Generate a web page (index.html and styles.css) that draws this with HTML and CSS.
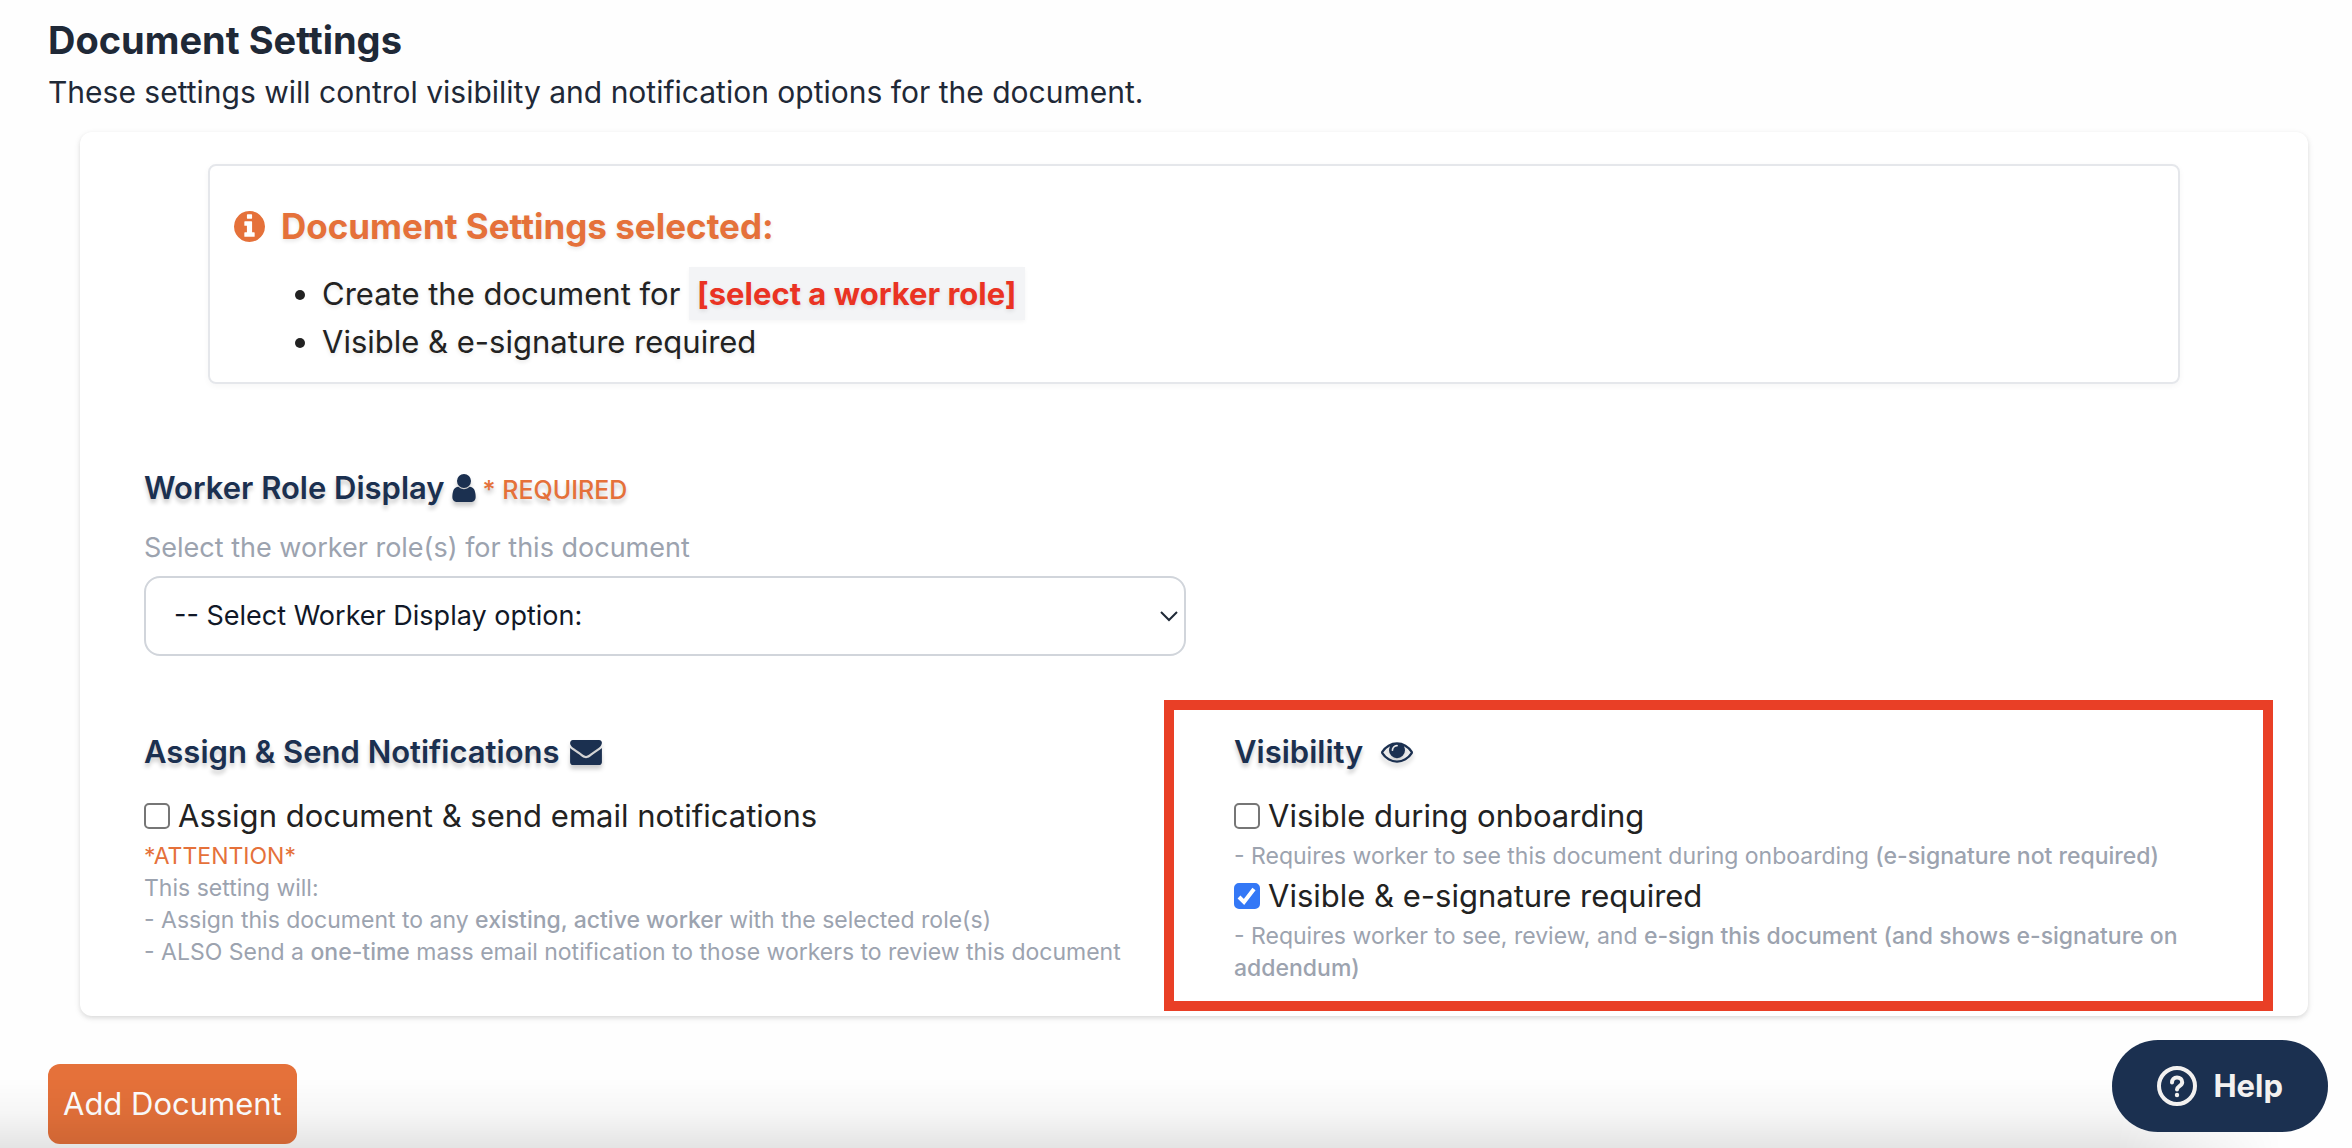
FILE: index.html
```html
<!DOCTYPE html>
<html lang="en">
<head>
    <meta charset="UTF-8">
    <meta name="viewport" content="width=device-width, initial-scale=1.0">
    <title>Document Settings</title>
    <link rel="stylesheet" href="styles.css">
</head>
<body>
    <form class="page">
        <h1>Document Settings</h1>
        <p class="intro">These settings will control visibility and notification options for the document.</p>

        <div class="card">
            <!-- Summary -->
            <div class="summary">
                <h2>
                    <svg class="icon-info" viewBox="128 128 1536 1536"><path fill="currentColor" d="M1152 1376v-160q0-14-9-23t-23-9h-96v-512q0-14-9-23t-23-9h-320q-14 0-23 9t-9 23v160q0 14 9 23t23 9h96v320h-96q-14 0-23 9t-9 23v160q0 14 9 23t23 9h448q14 0 23-9t9-23zm-128-896v-160q0-14-9-23t-23-9h-192q-14 0-23 9t-9 23v160q0 14 9 23t23 9h192q14 0 23-9t9-23zm640 416q0 209-103 385.5t-279.5 279.5-385.5 103-385.5-103-279.5-279.5-103-385.5 103-385.5 279.5-279.5 385.5-103 385.5 103 279.5 279.5 103 385.5z"/></svg>
                    Document Settings selected:
                </h2>
                <ul>
                    <li>Create the document for <strong class="chip">[select a worker role]</strong></li>
                    <li>Visible &amp; e-signature required</li>
                </ul>
            </div>

            <!-- Worker role -->
            <div class="role">
                <h3>
                    <label for="workerRole">Worker Role Display</label>
                    <svg class="icon-user" viewBox="256 128 1280 1536"><path fill="currentColor" d="M1536 1399q0 109-62.5 187t-150.5 78h-854q-88 0-150.5-78t-62.5-187q0-85 8.5-160.5t31.5-152 58.5-131 94-89 134.5-34.5q131 128 313 128t313-128q76 0 134.5 34.5t94 89 58.5 131 31.5 152 8.5 160.5zm-256-887q0 159-112.5 271.5t-271.5 112.5-271.5-112.5-112.5-271.5 112.5-271.5 271.5-112.5 271.5 112.5 112.5 271.5z"/></svg>
                    <span class="required">* REQUIRED</span>
                </h3>
                <p class="role-hint">Select the worker role(s) for this document</p>
                <select id="workerRole">
                    <option>-- Select Worker Display option:</option>
                </select>
            </div>

            <div class="columns">
                <!-- Notifications -->
                <section>
                    <h3 class="spaced">
                        Assign &amp; Send Notifications
                        <svg class="icon-mail" viewBox="0 256 1792 1408"><path fill="currentColor" d="M1792 710v794q0 66-47 113t-113 47h-1472q-66 0-113-47t-47-113v-794q44 49 101 87 362 246 497 345 57 42 92.5 65.5t94.5 48 110 24.5h2q51 0 110-24.5t94.5-48 92.5-65.5q170-123 498-345 57-39 100-87zm0-294q0 79-49 151t-122 123q-376 261-468 325-10 7-42.5 31t-54 38.5-52 32.5-57.5 27-50 9h-2q-23 0-50-9t-57.5-27-52-32.5-54-38.5-42.5-31q-91-64-262-182.5t-205-142.5q-62-42-117-115.5t-55-136.5q0-78 41.5-130t118.5-52h1472q65 0 112.5 47t47.5 113z"/></svg>
                    </h3>
                    <label class="check"><input type="checkbox"> Assign document &amp; send email notifications</label>
                    <p class="hint attention">*ATTENTION*</p>
                    <p class="hint">This setting will:</p>
                    <p class="hint">- Assign this document to any <b>existing, active worker</b> with the selected role(s)</p>
                    <p class="hint">- ALSO Send a <b>one-time</b> mass email notification to those workers to review this document</p>
                </section>

                <!-- Visibility -->
                <section class="highlight">
                    <h3 class="wide">
                        Visibility
                        <svg class="icon-eye" viewBox="0 384 1792 1152"><path fill="currentColor" d="M1664 960q-152-236-381-353 61 104 61 225 0 185-131.5 316.5t-316.5 131.5-316.5-131.5-131.5-316.5q0-121 61-225-229 117-381 353 133 205 333.5 326.5t434.5 121.5 434.5-121.5 333.5-326.5zm-720-384q0-20-14-34t-34-14q-125 0-214.5 89.5t-89.5 214.5q0 20 14 34t34 14 34-14 14-34q0-86 61-147t147-61q20 0 34-14t14-34zm848 384q0 34-20 69-140 230-376.5 368.5t-499.5 138.5-499.5-139-376.5-368q-20-35-20-69t20-69q140-229 376.5-368t499.5-139 499.5 139 376.5 368q20 35 20 69z"/></svg>
                    </h3>
                    <label class="check"><input type="checkbox"> Visible during onboarding</label>
                    <p class="hint">- Requires worker to see this document during onboarding <b>(e-signature not required)</b></p>
                    <label class="check"><input type="checkbox" checked> Visible &amp; e-signature required</label>
                    <p class="hint">- Requires worker to see, review, and <b>e-sign this document (and shows e-signature on addendum)</b></p>
                </section>
            </div>
        </div>

        <button type="button" class="add">Add Document</button>
    </form>

    <div class="fade"></div>

    <button type="button" class="help">
        <svg viewBox="0 0 40 40" fill="none" stroke="currentColor" stroke-linecap="round" stroke-linejoin="round">
            <circle cx="20" cy="20" r="18" stroke-width="4"/>
            <path stroke-width="4" d="M15 16.500c0-3 2-5 5-5s5.200 2 5.200 4.700c0 3.800-5.200 4-5.200 7.300"/>
            <circle cx="20" cy="29" r="2.200" fill="currentColor" stroke="none"/>
        </svg>
        Help
    </button>
</body>
</html>
```
FILE: styles.css
```css
* {
    box-sizing: border-box;
}
body {
    margin: 0;
    font-family: Inter, "Liberation Sans", sans-serif;
    font-size: 31px;
    line-height: 48px;
    color: #222;
    background: #fefefe;
    overflow: hidden;
}
h1, h2, h3, p, ul {
    margin: 0;
}
svg {
    flex: none;
}
.page {
    padding: 12px 44px 4px 48px;
}
h1 {
    font-size: 38px;
    font-weight: 700;
    line-height: 56px;
    color: #1f2937;
}
.intro {
    font-size: 30px;
    color: #1f2937;
}
.card {
    margin: 16px 0 48px 32px;
    padding: 32px 64px;
    border-radius: 12px;
    background: #fff;
    box-shadow: 0 2px 6px rgba(0, 0, 0, 0.1), 0 2px 4px rgba(0, 0, 0, 0.06);
}

/* Summary */
.summary {
    margin: 0 64px;
    padding: 32px 24px 16px;
    border: 2px solid #e5e7eb;
    border-radius: 8px;
    box-shadow: 0 2px 6px rgba(0, 0, 0, 0.04);
    text-shadow: 0 2px 4px rgba(0, 0, 0, 0.1);
}
.summary h2 {
    display: flex;
    align-items: center;
    gap: 16px;
    margin-bottom: 16px;
    font-size: 35px;
    font-weight: 700;
    line-height: 56px;
    color: #e5713a;
}
.summary ul {
    padding-left: 88px;
}
.chip {
    padding: 8px;
    font-weight: 700;
    color: #ea3323;
    background: #f3f4f6;
    box-shadow: 0 2px 4px rgba(0, 0, 0, 0.04);
}
.icon-info {
    width: 31px;
    height: 31px;
}

/* Section headings */
h3 {
    display: flex;
    align-items: baseline;
    gap: 6px;
    margin-bottom: 16px;
    font-size: 31px;
    font-weight: 600;
    color: #1b3050;
    text-shadow: 0 4px 4px rgba(0, 0, 0, 0.2);
}
h3 svg {
    align-self: center;
    filter: drop-shadow(0 4px 2px rgba(0, 0, 0, 0.2));
}
.spaced {
    gap: 10px;
}
.wide {
    gap: 18px;
}
.icon-user {
    width: 26px;
    height: 28px;
}
.icon-mail {
    width: 32px;
    height: 25px;
}
.icon-eye {
    width: 32px;
    height: 21px;
}
.required {
    font-size: 25px;
    font-weight: 500;
    line-height: 32px;
    color: #e5713a;
}

/* Worker role */
.role {
    margin: 80px 0 72px;
}
.role-hint {
    margin-bottom: 8px;
    font-size: 27px;
    line-height: 40px;
    color: #9ca3af;
}
select {
    display: block;
    width: calc(50% - 8px);
    height: 80px;
    padding: 0 28px;
    border: 2px solid #d1d5db;
    border-radius: 16px;
    appearance: none;
    font: inherit;
    font-size: 27px;
    color: #111827;
    background: #fff url("data:image/svg+xml,%3Csvg xmlns='http://www.w3.org/2000/svg' width='18' height='11' fill='none' stroke='%231f2937' stroke-width='2'%3E%3Cpath d='M1 1l8 8 8-8'/%3E%3C/svg%3E") no-repeat right 6px center;
}

/* Options */
.columns {
    display: grid;
    grid-template-columns: 1fr 1fr;
    gap: 80px;
}
.check {
    display: flex;
    align-items: center;
    gap: 8px;
}
.check input {
    flex: none;
    width: 26px;
    height: 26px;
    margin: 0;
    border: 2px solid #767676;
    border-radius: 5px;
    appearance: none;
    background: #fff;
}
.check input:checked {
    border-color: #3478f6;
    background: #3478f6 url("data:image/svg+xml,%3Csvg xmlns='http://www.w3.org/2000/svg' width='20' height='20' fill='none' stroke='white' stroke-width='4'%3E%3Cpath d='M2 11l5 5L17 3'/%3E%3C/svg%3E") no-repeat center;
}
.hint {
    font-size: 23px;
    line-height: 32px;
    color: #9ca3af;
}
.hint b {
    font-weight: 500;
}
.attention {
    color: #e5713a;
}
.highlight {
    position: relative;
}
.highlight::after {
    content: "";
    position: absolute;
    inset: -28px -29px -27px -70px;
    border: 10px solid #e93f26;
    pointer-events: none;
}

.add {
    display: block;
    height: 80px;
    padding: 0 15px;
    border: 0;
    border-radius: 12px;
    font: inherit;
    color: #fff;
    background: #e5713a;
}

/* Shade along the bottom of the window */
.fade {
    position: fixed;
    left: 0;
    right: 0;
    bottom: 0;
    height: 70px;
    background: linear-gradient(to bottom, transparent, rgba(0, 0, 0, 0.03) 50%, rgba(0, 0, 0, 0.1));
    -webkit-mask: linear-gradient(to right, #000 90%, transparent 97%);
    mask: linear-gradient(to right, #000 90%, transparent 97%);
    pointer-events: none;
}

.help {
    position: fixed;
    right: 24px;
    bottom: 16px;
    display: flex;
    align-items: center;
    gap: 16px;
    height: 92px;
    padding: 0 45px;
    border: 0;
    border-radius: 46px;
    font: inherit;
    font-size: 31px;
    font-weight: 700;
    color: #f3f1f0;
    background: #1b3050;
}
.help svg {
    width: 40px;
    height: 40px;
}
```
